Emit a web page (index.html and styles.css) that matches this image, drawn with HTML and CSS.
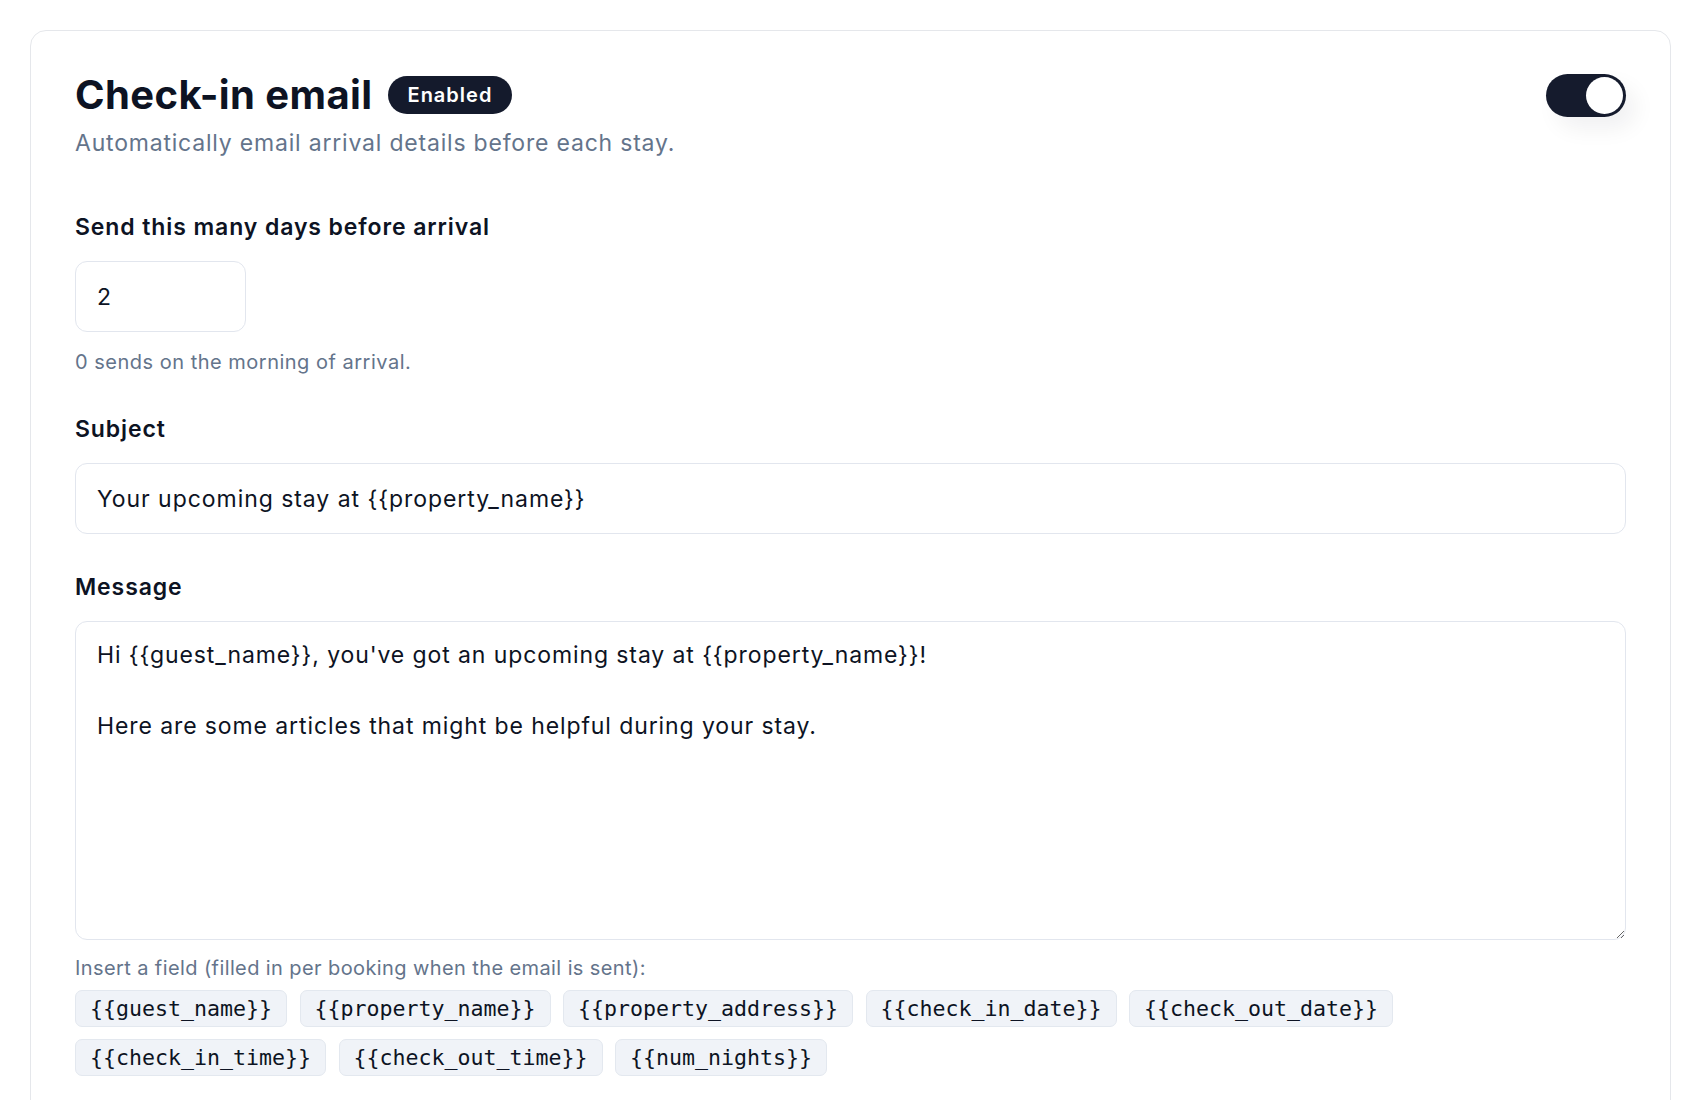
FILE: index.html
```html
<!DOCTYPE html>
<html lang="en">
<head>
<meta charset="utf-8">
<title>Check-in email</title>
<link rel="stylesheet" href="styles.css">
</head>
<body>
<div class="page">
  <section class="card">
    <header class="card-head">
      <div class="head-text">
        <div class="title-row">
          <h2 class="title">Check-in email</h2>
          <span class="badge">Enabled</span>
        </div>
        <p class="subtitle">Automatically email arrival details before each stay.</p>
      </div>
      <button class="toggle" aria-label="Enabled"><span class="knob"></span></button>
    </header>

    <div class="field field-first">
      <label class="label" for="days">Send this many days before arrival</label>
      <input id="days" class="input input-small" type="text" value="2">
      <p class="hint">0 sends on the morning of arrival.</p>
    </div>

    <div class="field">
      <label class="label" for="subject">Subject</label>
      <input id="subject" class="input" type="text" value="Your upcoming stay at {{property_name}}">
    </div>

    <div class="field">
      <label class="label" for="message">Message</label>
      <textarea id="message" class="input textarea">Hi {{guest_name}}, you've got an upcoming stay at {{property_name}}!

Here are some articles that might be helpful during your stay.</textarea>
      <p class="hint hint-insert">Insert a field (filled in per booking when the email is sent):</p>
      <div class="chips">
        <span class="chip">{{guest_name}}</span>
        <span class="chip">{{property_name}}</span>
        <span class="chip">{{property_address}}</span>
        <span class="chip">{{check_in_date}}</span>
        <span class="chip">{{check_out_date}}</span>
        <span class="chip">{{check_in_time}}</span>
        <span class="chip">{{check_out_time}}</span>
        <span class="chip">{{num_nights}}</span>
      </div>
    </div>
  </section>
</div>
</body>
</html>
```

FILE: styles.css
```css
* { box-sizing: border-box; }

html, body {
  margin: 0;
  padding: 0;
  background: #ffffff;
}

body {
  font-family: Inter, "Noto Sans", "Liberation Sans", sans-serif;
  color: #0f172a;
}

.page {
  padding: 30px 21px 0 30px;
}

.card {
  border: 1px solid #e5e7eb;
  border-radius: 16px;
  padding: 40px 44px 60px 44px;
  background: #ffffff;
}

.card-head {
  display: flex;
  justify-content: space-between;
  align-items: flex-start;
}

.title-row {
  display: flex;
  align-items: center;
  gap: 15px;
}

.title {
  margin: 0;
  font-size: 40px;
  line-height: 48px;
  font-weight: 700;
  letter-spacing: 0.01em;
  color: #0d1323;
}

.badge {
  display: inline-flex;
  align-items: center;
  height: 38px;
  padding: 0 20px;
  border-radius: 999px;
  background: #141a2c;
  color: #ffffff;
  font-size: 20px;
  font-weight: 600;
  letter-spacing: 1px;
}

.subtitle {
  margin: 8px 0 0 0;
  font-size: 23px;
  line-height: 32px;
  letter-spacing: 0.8px;
  color: #64748b;
}

.toggle {
  position: relative;
  margin: 3px 0 0 0;
  width: 80px;
  height: 43px;
  padding: 0;
  border: none;
  border-radius: 999px;
  background: #151b2d;
  box-shadow: 10px 12px 22px rgba(15, 23, 42, 0.06);
  cursor: pointer;
}

.knob {
  position: absolute;
  top: 3px;
  right: 3px;
  width: 37px;
  height: 37px;
  border-radius: 50%;
  background: #ffffff;
}

.field {
  margin-top: 37px;
  display: flex;
  flex-direction: column;
  align-items: flex-start;
}

.field-first {
  margin-top: 52px;
}

.label {
  font-size: 23px;
  line-height: 32px;
  font-weight: 600;
  letter-spacing: 0.9px;
  color: #0d1323;
  margin-bottom: 18px;
}

.input {
  display: block;
  width: 100%;
  height: 71px;
  padding: 0 21px;
  border: 1px solid #e2e6ee;
  border-radius: 12px;
  background: #ffffff;
  font-family: Inter, "Noto Sans", "Liberation Sans", sans-serif;
  font-size: 23px;
  letter-spacing: 0.95px;
  color: #0d1323;
  outline: none;
}

.input-small {
  width: 171px;
}

.textarea {
  height: 319px;
  padding: 16px 21px;
  line-height: 35.5px;
  letter-spacing: 0.9px;
  resize: vertical;
}

.hint {
  margin: 16px 0 0 0;
  font-size: 20px;
  line-height: 28px;
  letter-spacing: 0.5px;
  color: #64748b;
}

.hint-insert {
  margin-top: 14px;
  letter-spacing: 0.4px;
}

.chips {
  margin-top: 8px;
  display: flex;
  flex-wrap: wrap;
  gap: 12px 12.5px;
  max-width: 1400px;
}

.chip {
  display: inline-block;
  padding: 5px 14px;
  border: 1px solid #e3e8ef;
  border-radius: 7px;
  background: #f0f3f8;
  font-family: "DejaVu Sans Mono", "Liberation Mono", monospace;
  font-size: 21.6px;
  line-height: 25px;
  color: #0d1323;
}
```
